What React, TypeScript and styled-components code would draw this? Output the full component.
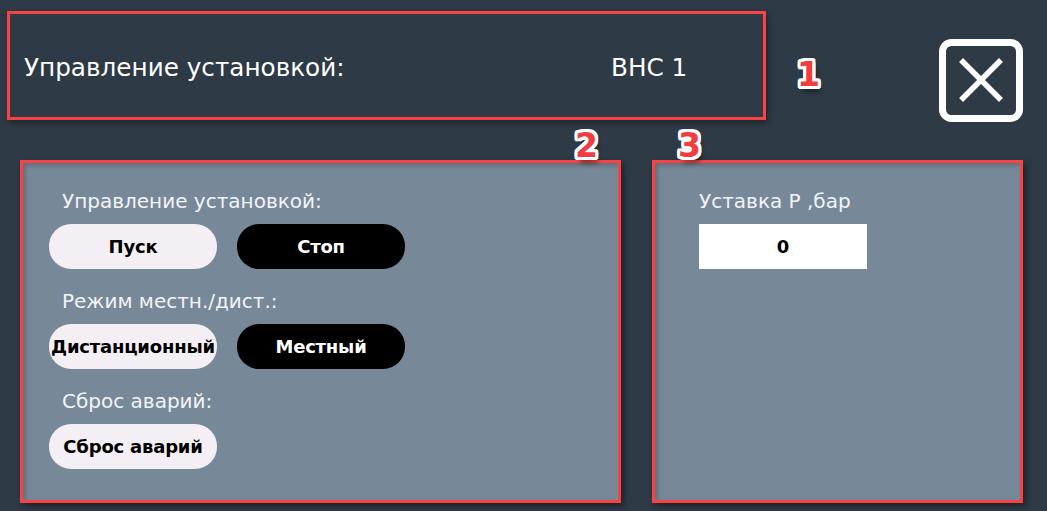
import React from 'react'
import styled, { createGlobalStyle } from 'styled-components'

const GlobalStyle = createGlobalStyle`
    html, body {
        margin: 0;
        padding: 0;
        background: #2e3a45;
        width: 1047px;
        height: 511px;
        overflow: hidden;
    }
    body {
        font-family: 'DejaVu Sans', 'Noto Sans', sans-serif;
    }
`

const Page = styled.div`
    box-sizing: border-box;
    width: 1047px;
    height: 511px;
    padding: 11px 24px 0 7px;
    display: flex;
    flex-direction: column;
`

const TopRow = styled.div`
    display: flex;
    align-items: flex-start;
    height: 109px;
`

const Header = styled.div`
    box-sizing: border-box;
    width: 759px;
    height: 109px;
    border: 3px solid #fa4245;
    box-shadow: 2px 3px 6px rgba(0, 0, 0, 0.35);
    display: flex;
    align-items: center;
    padding: 4px 0 0 14px;
    color: #ffffff;
    font-size: 24.7px;
`

const HeaderTitle = styled.span`
    width: 587px;
`

// annotation digits: red with a thick white outline
const Marker = styled.span`
    font-family: 'DejaVu Sans', sans-serif;
    font-weight: bold;
    font-size: 33px;
    line-height: 1;
    color: #f23c40;
    text-shadow:
        3px 0 0 #fff, -3px 0 0 #fff, 0 3px 0 #fff, 0 -3px 0 #fff,
        2px 2px 0 #fff, -2px 2px 0 #fff, 2px -2px 0 #fff, -2px -2px 0 #fff,
        3px 2px 0 #fff, -3px 2px 0 #fff, 3px -2px 0 #fff, -3px -2px 0 #fff,
        2px 3px 0 #fff, -2px 3px 0 #fff, 2px -3px 0 #fff, -2px -3px 0 #fff,
        3px 6px 5px rgba(0, 0, 0, 0.45);
`

const TopMarker = styled(Marker)`
    margin: 47px 0 0 31px;
`

const CloseButton = styled.button`
    margin: 28px 0 0 auto;
    width: 84px;
    height: 84px;
    padding: 0;
    border: none;
    background: transparent;
    cursor: pointer;
    display: block;
`

const PanelRow = styled.div`
    display: flex;
    gap: 31px;
    margin: 40px 0 0 13px;
`

const Panel = styled.section<{ $width: number }>`
    position: relative;
    box-sizing: border-box;
    width: ${p => p.$width}px;
    height: 343px;
    background: #778899;
    border: 3px solid #fa4245;
    box-shadow: 3px 3px 6px rgba(0, 0, 0, 0.4), inset 3px 3px 4px rgba(0, 0, 0, 0.18);
    padding: 26px 0 0 26px;
    display: flex;
    flex-direction: column;
`

const PanelMarker = styled(Marker)<{ $left: number }>`
    position: absolute;
    top: -34px;
    left: ${p => p.$left}px;
`

const Label = styled.div<{ $indent?: number }>`
    color: #f2f4f7;
    font-size: 20px;
    line-height: 24px;
    height: 24px;
    margin-left: ${p => p.$indent ?? 13}px;
`

const ButtonRow = styled.div`
    display: flex;
    gap: 20px;
    margin: 11px 0 20px;
`

const PillButton = styled.button<{ $dark?: boolean }>`
    width: 168px;
    height: 45px;
    border: none;
    border-radius: 22px;
    padding: 0;
    white-space: nowrap;
    background: ${p => (p.$dark ? '#000000' : '#f4eff4')};
    color: ${p => (p.$dark ? '#ffffff' : '#000000')};
    font-family: 'DejaVu Sans', sans-serif;
    font-weight: bold;
    font-size: 18px;
    letter-spacing: -0.2px;
    display: flex;
    align-items: center;
    justify-content: center;
    overflow: visible;
    cursor: pointer;
`

const ValueBox = styled.div`
    margin: 11px 0 0 18px;
    width: 168px;
    height: 45px;
    background: #ffffff;
    color: #000000;
    font-weight: bold;
    font-size: 18px;
    display: flex;
    align-items: center;
    justify-content: center;
`

const CloseIcon = () => (
    <svg width="84" height="84" viewBox="0 0 84 84">
        <rect x="3.5" y="3.5" width="77" height="76" rx="9" fill="none" stroke="#ffffff" strokeWidth="7" />
        <path d="M24 23 L60 59 M60 23 L24 59" stroke="#ffffff" strokeWidth="5.5" strokeLinecap="square" />
    </svg>
)

const controls = [
    { label: 'Управление установкой:', left: 'Пуск', right: 'Стоп' },
    { label: 'Режим местн./дист.:', left: 'Дистанционный', right: 'Местный' },
    { label: 'Сброс аварий:', left: 'Сброс аварий' }
]

export default function App() {
    return (
        <>
            <GlobalStyle />
            <Page>
                <TopRow>
                    <Header>
                        <HeaderTitle>Управление установкой:</HeaderTitle>
                        <span>ВНС 1</span>
                    </Header>
                    <TopMarker>1</TopMarker>
                    <CloseButton aria-label="Закрыть">
                        <CloseIcon />
                    </CloseButton>
                </TopRow>
                <PanelRow>
                    <Panel $width={601}>
                        <PanelMarker $left={552}>2</PanelMarker>
                        {controls.map(item => (
                            <React.Fragment key={item.label}>
                                <Label>{item.label}</Label>
                                <ButtonRow>
                                    <PillButton>{item.left}</PillButton>
                                    {item.right && <PillButton $dark>{item.right}</PillButton>}
                                </ButtonRow>
                            </React.Fragment>
                        ))}
                    </Panel>
                    <Panel $width={371}>
                        <PanelMarker $left={23}>3</PanelMarker>
                        <Label $indent={18}>Уставка Р ,бар</Label>
                        <ValueBox>0</ValueBox>
                    </Panel>
                </PanelRow>
            </Page>
        </>
    )
}
